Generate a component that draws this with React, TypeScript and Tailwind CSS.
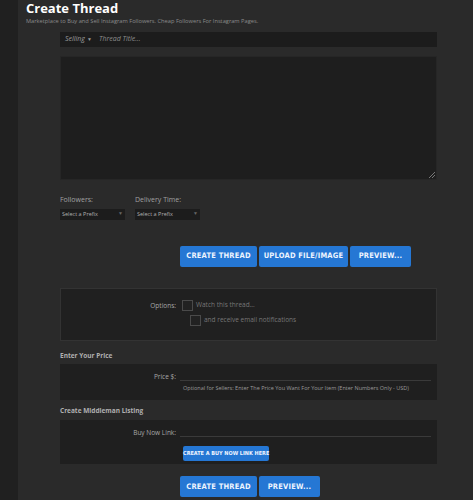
import React from "react";

const btn =
  "h-[21px] whitespace-nowrap rounded-[2px] bg-[#2577d4] text-[7.5px] font-bold uppercase tracking-[0.2px] text-[#eef4ff] [font-family:'Liberation_Sans_Narrow','DejaVu_Sans_Condensed',sans-serif]";

function Select({ width }: { width: string }) {
  return (
    <div className={`flex h-[11px] items-center justify-between bg-[#1c1c1c] px-[2px] ${width}`}>
      <span className="text-[5.5px] text-[#b0b0b0]">Select a Prefix</span>
      <span className="text-[5px] text-[#666]">▼</span>
    </div>
  );
}

function Checkbox() {
  return <span className="block h-[11px] w-[11px] border border-[#4a4a4a] bg-[#222]" />;
}

export default function App() {
  return (
    <div className="flex h-[500px] w-[473px] overflow-hidden bg-[#2a2a2a] [font-family:'Open_Sans',sans-serif]">
      <div className="w-[18px] shrink-0 bg-[#202020]" />
      <div className="flex-1 pl-[8px]">
        <h1 className="pt-[1px] text-[13px] font-bold leading-[15px] text-white">Create Thread</h1>
        <p className="mt-[1px] text-[5.7px] leading-[8px] text-[#8a8a8a]">
          Marketplace to Buy and Sell Instagram Followers. Cheap Followers For Instagram Pages.
        </p>

        <div className="ml-[34px] w-[377px]">
          <div className="mt-[7px] flex h-[15px] items-center bg-[#1c1c1c] pl-[5px] text-[7px] italic">
            <span className="text-[#9a9a9a]">Selling</span>
            <span className="ml-[2px] text-[5px] text-[#9a9a9a]">▼</span>
            <span className="ml-[7px] text-[#8c8c8c]">Thread Title...</span>
          </div>

          <div className="relative mt-[9px] h-[124px] border border-[#262626] bg-[#1e1e1e]">
            <svg className="absolute bottom-[1px] right-[1px]" width="6" height="6" viewBox="0 0 6 6">
              <path d="M6 0L0 6M6 3L3 6" stroke="#777" strokeWidth="1" />
            </svg>
          </div>

          <div className="mt-[15px] flex gap-[10px]">
            <div>
              <div className="text-[7px] text-[#a0a0a0]">Followers:</div>
              <div className="mt-[3px]">
                <Select width="w-[65px]" />
              </div>
            </div>
            <div>
              <div className="text-[7px] text-[#a0a0a0]">Delivery Time:</div>
              <div className="mt-[3px]">
                <Select width="w-[65px]" />
              </div>
            </div>
          </div>

          <div className="mt-[26px] flex gap-[2px] pl-[120px]">
            <button className={`${btn} w-[77px]`}>Create Thread</button>
            <button className={`${btn} w-[89px]`}>Upload File/Image</button>
            <button className={`${btn} w-[61px]`}>Preview...</button>
          </div>

          <div className="mt-[21px] h-[53px] border border-[#333] bg-[#202020] pt-[11px]">
            <div className="flex items-start">
              <div className="w-[115px] pt-[1px] text-right text-[6.5px] text-[#a8a8a8]">Options:</div>
              <div className="ml-[6px]">
                <div className="flex items-center gap-[3px]">
                  <Checkbox />
                  <span className="text-[6.5px] text-[#777]">Watch this thread...</span>
                </div>
                <div className="mt-[4px] ml-[8px] flex items-center gap-[3px]">
                  <Checkbox />
                  <span className="text-[6.5px] text-[#777]">and receive email notifications</span>
                </div>
              </div>
            </div>
          </div>

          <div className="mt-[10px] text-[6.5px] font-bold text-[#b0b0b0]">Enter Your Price</div>
          <div className="mt-[4px] h-[36px] bg-[#1f1f1f] pt-[8px]">
            <div className="flex">
              <div className="w-[116px] text-right text-[6.5px] text-[#a8a8a8]">Price $:</div>
              <div className="ml-[4px] flex-1 pr-[6px]">
                <div className="h-[9px] border-b border-[#3a3a3a]" />
                <div className="mt-[3px] pl-[3px] text-[5.5px] text-[#9a9a9a]">
                  Optional for Sellers: Enter The Price You Want For Your Item (Enter Numbers Only - USD)
                </div>
              </div>
            </div>
          </div>

          <div className="mt-[6px] text-[6.5px] font-bold text-[#b0b0b0]">Create Middleman Listing</div>
          <div className="mt-[4px] h-[44px] bg-[#1f1f1f] pt-[8px]">
            <div className="flex">
              <div className="w-[116px] text-right text-[6.5px] text-[#a8a8a8]">Buy Now Link:</div>
              <div className="ml-[4px] flex-1 pr-[6px]">
                <div className="h-[9px] border-b border-[#3a3a3a]" />
                <button className="mt-[4px] ml-[3px] h-[15px] w-[86px] whitespace-nowrap rounded-[2px] bg-[#2577d4] text-[5.5px] font-bold uppercase text-[#eef4ff] [font-family:'Liberation_Sans_Narrow','DejaVu_Sans_Condensed',sans-serif]">
                  Create a Buy Now Link Here
                </button>
              </div>
            </div>
          </div>

          <div className="mt-[12px] flex gap-[2px] pl-[120px]">
            <button className={`${btn} w-[77px]`}>Create Thread</button>
            <button className={`${btn} w-[61px]`}>Preview...</button>
          </div>
        </div>
      </div>
    </div>
  );
}
